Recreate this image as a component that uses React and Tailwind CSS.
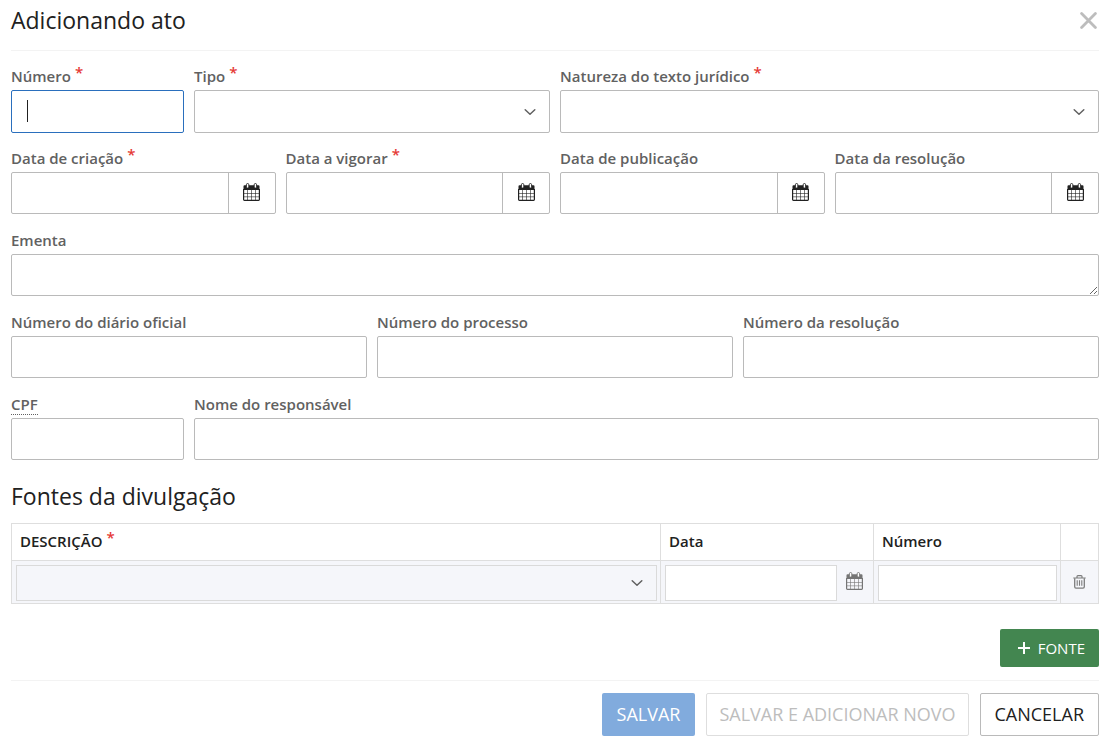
import React from "react";

const inputBase =
  "block w-full rounded-xs border border-[#bababa] bg-white px-[15px] text-base text-[#212121] outline-none";

function CalendarIcon({ className }) {
  return (
    <svg viewBox="0 0 17 18" className={className} fill="none" stroke="currentColor" aria-hidden="true">
      <path d="M1.5 2.2h14a1 1 0 0 1 1 1V7H.5V3.2a1 1 0 0 1 1-1z" fill="currentColor" stroke="none" />
      <path d="M.6 6v10.6q0 .8.8.8h14.2q.8 0 .8-.8V6" strokeWidth="1.2" />
      <path d="M4.5 7v10.4M8.5 7v10.4M12.5 7v10.4M.6 10.5h15.8M.6 13.8h15.8" strokeWidth="0.8" strokeOpacity="0.75" />
      <rect x="3.4" y="0.5" width="2.4" height="4.6" rx="1.2" fill="white" strokeWidth="0.9" />
      <rect x="11.2" y="0.5" width="2.4" height="4.6" rx="1.2" fill="white" strokeWidth="0.9" />
    </svg>
  );
}

function Chevron() {
  return (
    <svg
      viewBox="0 0 12 8"
      className="pointer-events-none absolute top-1/2 right-3.5 h-2 w-3 -translate-y-1/2"
      fill="none"
      stroke="#616161"
      strokeWidth="1.5"
      strokeLinecap="round"
      strokeLinejoin="round"
      aria-hidden="true"
    >
      <path d="M1.2 1.7 6 6.2l4.8-4.5" />
    </svg>
  );
}

function TrashIcon() {
  return (
    <svg viewBox="0 0 13 14" className="h-3.5 w-[13px]" fill="none" stroke="#7d7d7d" aria-hidden="true">
      <path d="M0.3 3h12.4M4 2.8V1.6Q4 0.7 4.9 0.7h3.2Q9 0.7 9 1.6v1.2" strokeWidth="1.2" />
      <path d="M1.7 3.2v8.6q0 1.3 1.3 1.3h7q1.3 0 1.3-1.3V3.2" strokeWidth="1.3" />
      <path d="M4.2 5.2v5.6M6.5 5.2v5.6M8.8 5.2v5.6" strokeWidth="1.1" />
    </svg>
  );
}

function Required() {
  return (
    <span className="relative -top-1 ml-1 text-[#e53935]" aria-hidden="true">
      *
    </span>
  );
}

function Field({ id, label, required, className, children }) {
  return (
    <div className={className}>
      <label htmlFor={id} className="block h-6 text-[15px] leading-5 font-semibold whitespace-nowrap text-[#616161]">
        {label}
        {required && <Required />}
      </label>
      {children}
    </div>
  );
}

function SelectField({ id, ...props }) {
  return (
    <Field id={id} {...props}>
      <div className="relative">
        <select id={id} className={`${inputBase} h-[43px] appearance-none`}>
          <option value=""></option>
        </select>
        <Chevron />
      </div>
    </Field>
  );
}

function DateField({ id, label, required }) {
  return (
    <Field id={id} label={label} required={required} className="col-span-3">
      <div className="flex h-[42px] rounded-xs border border-[#bababa] bg-white">
        <input id={id} type="text" className="min-w-0 flex-1 px-[15px] outline-none" />
        <button
          type="button"
          aria-label={`Calendário: ${label}`}
          className="flex w-[47px] items-center justify-center border-l border-[#bababa] pb-0.5 text-[#212121]"
        >
          <CalendarIcon className="h-[18px] w-[17px]" />
        </button>
      </div>
    </Field>
  );
}

function TextField({ id, ...props }) {
  return (
    <Field id={id} {...props}>
      <input id={id} type="text" className={`${inputBase} h-[42px]`} />
    </Field>
  );
}

const cell = "border border-[#dedede]";
const headCell = `${cell} h-[37px] px-2 pb-0.5 text-left align-middle font-semibold`;
const cellInput = "block h-9 w-full min-w-0 border border-[#dadada] px-2 outline-none";

export default function App() {
  return (
    <form
      className="bg-white px-[11px] pr-2.5 pb-2 font-['Open_Sans','Noto_Sans',sans-serif] text-[#212121]"
      onSubmit={(e) => e.preventDefault()}
    >
      <header className="flex h-[51px] items-start justify-between border-b border-[#f3f3f3]">
        <h1 className="pt-1 text-[23px] leading-8">Adicionando ato</h1>
        <button type="button" aria-label="Fechar" className="mt-3 mr-0.5 text-[#bdbdbd]">
          <svg viewBox="0 0 17 17" className="size-[17px]" fill="none" stroke="currentColor" strokeWidth="2.8" strokeLinecap="round" aria-hidden="true">
            <path d="M1.6 1.6l13.8 13.8M15.4 1.6 1.6 15.4" />
          </svg>
        </button>
      </header>

      <div className="grid auto-rows-[82px] grid-cols-12 gap-x-2.5 pt-[15px]">
        <Field id="numero" label="Número" required className="col-span-2">
          <div className="relative">
            <input id="numero" type="text" className="block h-[43px] w-full rounded-xs border border-[#2a6fbd] bg-white px-[15px] caret-transparent outline-none" />
            <span className="pointer-events-none absolute top-2.5 left-4 h-[22px] w-px bg-[#212121]" />
          </div>
        </Field>
        <SelectField id="tipo" label="Tipo" required className="col-span-4" />
        <SelectField id="natureza" label="Natureza do texto jurídico" required className="col-span-6" />

        <DateField id="criacao" label="Data de criação" required />
        <DateField id="vigorar" label="Data a vigorar" required />
        <DateField id="publicacao" label="Data de publicação" />
        <DateField id="resolucao" label="Data da resolução" />

        <Field id="ementa" label="Ementa" className="col-span-12">
          <textarea id="ementa" className={`${inputBase} h-[42px] resize`} />
        </Field>

        <TextField id="diario" label="Número do diário oficial" className="col-span-4" />
        <TextField id="processo" label="Número do processo" className="col-span-4" />
        <TextField id="num-resolucao" label="Número da resolução" className="col-span-4" />

        <TextField
          id="cpf"
          label={<span className="border-b border-dotted border-[#616161]">CPF</span>}
          className="col-span-2"
        />
        <TextField id="responsavel" label="Nome do responsável" className="col-span-10" />
      </div>

      <h2 className="pt-1 pb-[11px] text-[23px] leading-8">Fontes da divulgação</h2>

      <table className="w-full table-fixed border-collapse text-[15px] leading-5">
        <colgroup>
          <col />
          <col className="w-[213px]" />
          <col className="w-[187px]" />
          <col className="w-[38px]" />
        </colgroup>
        <thead>
          <tr>
            <th scope="col" className={headCell}>
              DESCRIÇÃO
              <Required />
            </th>
            <th scope="col" className={headCell}>Data</th>
            <th scope="col" className={headCell}>Número</th>
            <th className={headCell} aria-label="Ações"></th>
          </tr>
        </thead>
        <tbody>
          <tr className="h-[43px] bg-[#f5f6fa]">
            <td className={`${cell} pt-px pr-[3px] pl-1`}>
              <div className="relative">
                <select aria-label="Descrição" className={`${cellInput} appearance-none bg-[#f5f6fa]`}>
                  <option value=""></option>
                </select>
                <Chevron />
              </div>
            </td>
            <td className={`${cell} pt-px pl-1`}>
              <div className="flex">
                <input aria-label="Data" type="text" className={`${cellInput} flex-1 bg-white`} />
                <button type="button" aria-label="Abrir calendário" className="flex w-9 items-center justify-center pr-0.5 pb-1 text-[#757575]">
                  <CalendarIcon className="h-[18px] w-[17px]" />
                </button>
              </div>
            </td>
            <td className={`${cell} pt-px pr-[3px] pl-1`}>
              <input aria-label="Número" type="text" className={`${cellInput} bg-white`} />
            </td>
            <td className={cell}>
              <button type="button" aria-label="Remover" className="flex w-full items-center justify-center">
                <TrashIcon />
              </button>
            </td>
          </tr>
        </tbody>
      </table>

      <div className="flex justify-end border-b border-[#f3f3f3] pt-[25px] pb-[13px]">
        <button type="button" className="flex h-[38px] items-center gap-2 rounded-xs bg-[#438650] pr-3.5 pl-[18px] text-[15px] text-white">
          <svg viewBox="0 0 12 12" className="size-3" stroke="currentColor" strokeWidth="2" aria-hidden="true">
            <path d="M6 0v12M0 6h12" />
          </svg>
          FONTE
        </button>
      </div>

      <footer className="flex justify-end gap-[11px] pt-3 text-lg leading-6">
        <button type="submit" className="h-[43px] rounded-xs bg-[#81abdd] px-[15px] pb-0.5 text-white">SALVAR</button>
        <button type="button" disabled className="h-[43px] rounded-xs border border-[#dedede] px-3 pb-0.5 text-[#bdbdbd]">
          SALVAR E ADICIONAR NOVO
        </button>
        <button type="button" className="h-[43px] rounded-xs border border-[#bababa] px-3.5 pb-0.5">CANCELAR</button>
      </footer>
    </form>
  );
}
